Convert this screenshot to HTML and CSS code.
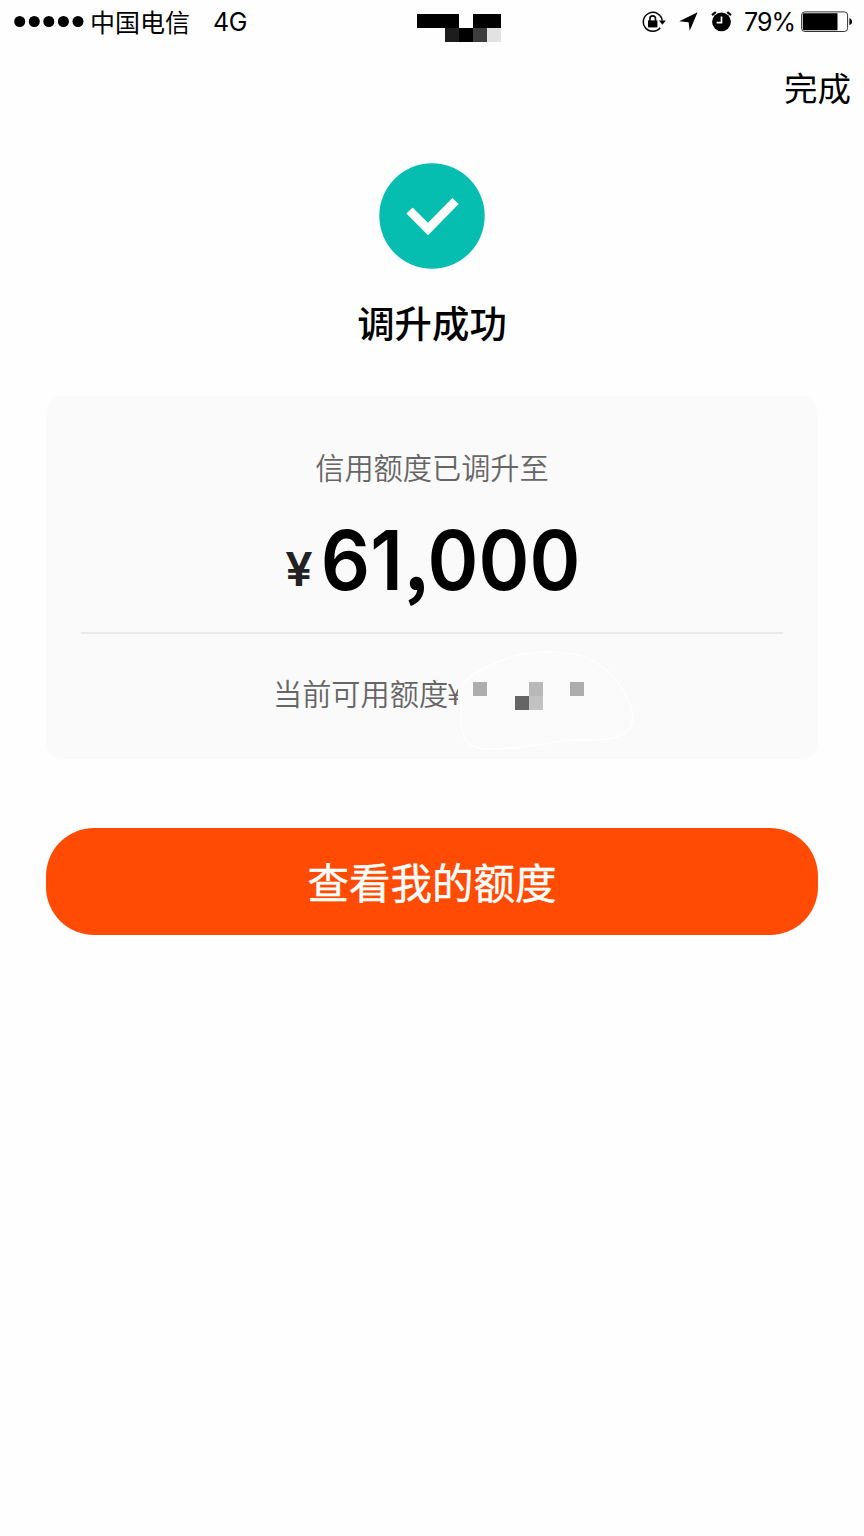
FILE: index.html
```html
<!DOCTYPE html>
<html lang="zh-CN">
<head>
<meta charset="utf-8">
<title>调升成功</title>
<link rel="stylesheet" href="styles.css">
</head>
<body>
<header class="status">
  <div class="status-left">
    <svg class="signal" width="71" height="12" viewBox="0 0 71 12"><circle cx="5.7" cy="5.5" r="5.5"/><circle cx="20.3" cy="5.5" r="5.5"/><circle cx="34.8" cy="5.5" r="5.5"/><circle cx="49.4" cy="5.5" r="5.5"/><circle cx="64" cy="5.5" r="5.5"/></svg>
    <span class="carrier">中国电信</span>
    <span class="network">4G</span>
  </div>
  <svg class="clock-mosaic" width="84" height="28" viewBox="0 0 84 28" shape-rendering="crispEdges"><path d="M0 0h42v14H0zM56 0h28v14H56zM42 14h14v14H42z"/><path fill="#1d1d1d" d="M28 14h14v14H28z"/><path fill="#3d3d3d" d="M56 14h14v14H56z"/><path fill="#e2e2e2" d="M70 14h14v14H70z"/></svg>
  <div class="status-right">
    <svg class="lock" width="24" height="22" viewBox="0 0 24 22"><path d="M18.2 16.8A9.5 9.5 0 1 1 20.2 9.5" fill="none" stroke="#000" stroke-width="1.5"/><path d="M17 9.4h6.8l-3.4 4.4z"/><path d="M6 9.4h9.4v7H6z"/><path d="M7.9 10V7.7a2.8 2.8 0 0 1 5.6 0V10" fill="none" stroke="#000" stroke-width="1.6"/></svg>
    <svg class="location" width="19" height="19" viewBox="0 0 19 19"><path d="M18.6.3 10.7 18.7 9.6 10.2.3 9.3z"/></svg>
    <svg class="alarm" width="21" height="21" viewBox="0 0 21 21"><circle cx="10.5" cy="10.8" r="9.4"/><path d="M1 4.2 4.8 1M16.2 1 20 4.2" stroke="#000" stroke-width="2.2"/><path d="M10.5 5.5v6.2H5.6" fill="none" stroke="#fff" stroke-width="1.7"/></svg>
    <span class="percent">79%</span>
    <svg class="battery" width="52" height="22" viewBox="0 0 52 22"><rect x=".6" y=".9" width="46" height="19.6" rx="3.2" fill="none" stroke="#333" stroke-width="1"/><path d="M3 2.2h33.5v17H3a1.2 1.2 0 0 1-1.2-1.2V3.4A1.2 1.2 0 0 1 3 2.2z"/><path d="M48.4 7.3c3.6 1.2 3.6 5.6 0 6.8z"/></svg>
  </div>
</header>
<nav class="nav"><span>完成</span></nav>
<main class="content">
  <svg class="success" width="106" height="106" viewBox="0 0 106 106"><circle cx="53" cy="53" r="52.7" fill="#05beb0"/><path d="M30.5 47.5 49 66 76.500 38" fill="none" stroke="#fff" stroke-width="8.8"/></svg>
  <h1 class="title">调升成功</h1>
  <section class="card">
    <p class="label">信用额度已调升至</p>
    <p class="amount"><span class="currency">¥</span><span class="value">61<span class="comma">,</span>000</span></p>
    <div class="available">
      <span class="available-text">当前可用额度<span class="yen">¥</span></span>
      <svg class="mosaic" width="178" height="102" viewBox="0 0 178 102"><path d="M-1 28h15v30H-1z" fill="#fafafa"/><path d="M4 36C10 25 22 20 40 12C68-1 119-2 140 14C163 28 183 65 171 80C157 95 125 87 98 92C64 98 39 101 19 98C2 93 1 77 4 36Z" fill="#fbfbfb" stroke="#fff" stroke-width="1.5"/><g shape-rendering="crispEdges"><path fill="#adadad" d="M15 32h14v14H15zM112 32h14v14h-14z"/><path fill="#b7b7b7" d="M71 32h14v14H71z"/><path fill="#c2c2c2" d="M71 46h14v14H71z"/><path fill="#656565" d="M57 46h14v14H57z"/></g></svg>
    </div>
  </section>
  <button class="primary" type="button"><span class="primary-text">查看我的额度</span></button>
</main>
</body>
</html>
```
FILE: styles.css
```css
* { box-sizing: border-box; }
body {
  margin: 0;
  min-height: 1536px;
  background: #fefefe;
  color: #000;
  font-family: "Noto Sans CJK SC", sans-serif;
}
svg { display: block; flex: none; }
h1, p { margin: 0; }

.status {
  display: grid;
  grid-template-columns: 417px 84px 1fr;
  height: 42px;
}
.status-left, .status-right { display: flex; align-items: center; height: 43px; }
.status-left { padding-left: 14px; }
.carrier { margin-left: 5px; font-size: 25px; line-height: 38px; padding-bottom: 2px; }
.network, .percent { font-family: Inter, sans-serif; font-size: 25px; line-height: 42px; }
.network { margin-left: 23px; letter-spacing: -.5px; }
.clock-mosaic { margin-top: 14px; }
.status-right { justify-content: flex-end; padding-right: 11px; }
.location { margin-left: 13px; }
.alarm { margin-left: 13px; }
.percent { margin-left: 12px; letter-spacing: -1px; }
.battery { margin-left: 6px; }

.nav {
  display: flex;
  justify-content: flex-end;
  height: 88px;
  padding: 20px 13px 0 0;
  font-size: 33.5px;
  line-height: 50px;
}

.content {
  display: flex;
  flex-direction: column;
  align-items: center;
  padding: 33px 46px 0;
}
.title {
  margin-top: 23px;
  font-size: 37.4px;
  font-weight: 500;
  line-height: 60px;
}
.card {
  width: 772px;
  height: 363px;
  margin-top: 44px;
  padding: 45px 35px 0;
  border-radius: 16px;
  background: #fafafa;
  text-align: center;
}
.label { color: #666; font-size: 29.2px; font-weight: 350; line-height: 51px; }
.amount {
  display: flex;
  justify-content: center;
  height: 142px;
  padding-top: 18px;
  border-bottom: 2px solid #e9e9e9;
  font-family: Inter, sans-serif;
  font-weight: 600;
}
.currency { padding-top: 9px; color: #222; font-size: 46px; line-height: 100px; transform: scaleX(1.06); }
.value { margin: 0 -13px 0 -1px; font-size: 83px; line-height: 100px; transform: scaleX(.93); }
.comma { margin-left: 2px; font-family: "Noto Sans CJK SC", sans-serif; font-size: 76px; font-weight: 700; line-height: 1; }
.available { display: flex; height: 124px; padding-left: 192px; }
.available-text {
  width: 185px;
  white-space: nowrap;
  text-align: left;
  color: #666;
  font-size: 29.2px;
  font-weight: 350;
  line-height: 116px;
}
.yen { margin-left: -1px; }
.mosaic { position: relative; margin-top: 16px; }
.primary {
  width: 772px;
  height: 107px;
  margin-top: 69px;
  padding: 0 0 2px;
  border: 0;
  border-radius: 48px;
  background: #ff4b03;
  color: #fff;
  font-family: inherit;
  font-size: 41.5px;
  font-weight: 400;
}
.primary-text { -webkit-text-stroke: .4px #fff; }
```
